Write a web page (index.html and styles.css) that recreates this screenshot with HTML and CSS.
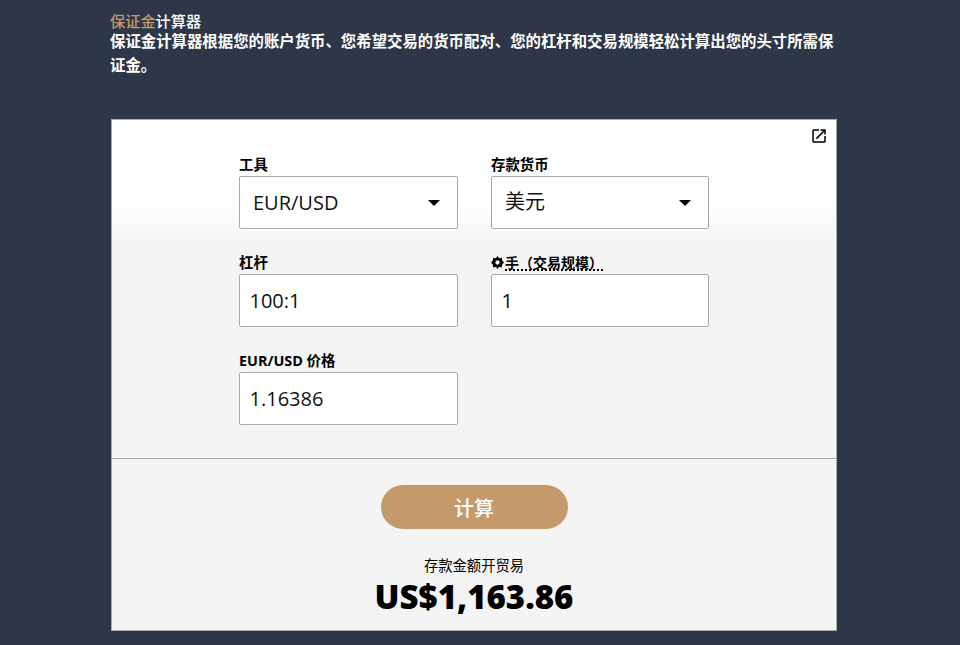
FILE: index.html
```html
<!DOCTYPE html>
<html lang="zh">
<head>
<meta charset="utf-8">
<title>保证金计算器</title>
<link rel="stylesheet" href="styles.css">
</head>
<body>
<main class="page">
  <header class="intro">
    <h1 class="title"><span class="accent">保证金</span>计算器</h1>
    <p class="desc">保证金计算器根据您的账户货币、您希望交易的货币配对、您的杠杆和交易规模轻松计算出您的头寸所需保证金。</p>
  </header>
  <section class="card">
    <a class="popout" aria-label="open">
      <svg viewBox="0 0 24 24" width="18" height="18"><path d="M19 19H5V5h7V3H5a2 2 0 0 0-2 2v14a2 2 0 0 0 2 2h14a2 2 0 0 0 2-2v-7h-2v7zM14 3v2h3.59l-9.83 9.83 1.41 1.41L19 6.41V10h2V3h-7z"/></svg>
    </a>
    <div class="form">
      <div class="field">
        <label class="label">工具</label>
        <div class="control select"><span>EUR/USD</span><i class="caret"></i></div>
      </div>
      <div class="field">
        <label class="label">存款货币</label>
        <div class="control select"><span class="cjk-value">美元</span><i class="caret"></i></div>
      </div>
      <div class="field">
        <label class="label">杠杆</label>
        <div class="control">100:1</div>
      </div>
      <div class="field">
        <label class="label label-icon">
          <svg viewBox="0 0 24 24" width="13" height="13"><path fill-rule="evenodd" d="M12 0l3 4 5-1 .5 5 3.500 4-3.500 4-.5 5-5-1-3 4-3-4-5 1-.5-5L0 12l3.500-4L4 3l5 1zM12 8a4 4 0 1 0 0 8 4 4 0 0 0 0-8z"/></svg>
          <span class="dotted">手（交易规模）</span>
        </label>
        <div class="control">1</div>
      </div>
      <div class="field">
        <label class="label">EUR/USD 价格</label>
        <div class="control">1.16386</div>
      </div>
    </div>
    <div class="result">
      <button class="calc" type="button">计算</button>
      <p class="result-label">存款金额开贸易</p>
      <p class="amount">US$1,163.86</p>
    </div>
  </section>
</main>
</body>
</html>
```
FILE: styles.css
```css
* { box-sizing: border-box; }
html, body { margin: 0; height: 100%; }
body {
  background: #2d3748;
  font-family: "Open Sans", "Noto Sans CJK SC", sans-serif;
  overflow: hidden;
}
.page { width: 960px; height: 645px; padding: 12px 0 0 110px; }
.intro { width: 730px; height: 69px; color: #fff; }
.title { margin: 0; font-size: 15.2px; line-height: 18px; font-weight: 500; }
.accent { color: #c49a6c; }
.desc { margin: 0; font-size: 15.4px; line-height: 24px; font-weight: 600; }
.card {
  position: relative;
  width: 726px;
  height: 512px;
  margin: 38px 0 0 1px;
  border: 1px solid #aaa;
  background: linear-gradient(#fff 0, #fff 80px, #f4f4f4 130px);
}
.popout { position: absolute; top: 7px; right: 8.5px; display: block; height: 18px; }
.form {
  height: 339px;
  padding: 56px 127px 0 127px;
  display: grid;
  grid-template-columns: 219px 218px;
  column-gap: 33px;
  grid-auto-rows: 53px;
  row-gap: 45px;
  border-bottom: 1px solid #aaa;
}
.field { position: relative; display: flex; flex-direction: column; padding-top: 21px; height: 74px; margin-top: -21px; }
.label {
  position: absolute;
  top: 1px;
  left: 0;
  font-size: 14.4px;
  line-height: 18px;
  font-weight: 700;
  color: #000;
  white-space: nowrap;
}
.label-icon { display: flex; align-items: center; }
.dotted { border-bottom: 2px dotted #000; font-size: 14px; line-height: 13px; margin: 2px 0 0 1px; }
.control {
  height: 53px;
  border: 1px solid #aaa;
  border-radius: 2px;
  background: #fff;
  padding: 0 9.5px;
  display: flex;
  align-items: center;
  justify-content: space-between;
  font-size: 20px;
  color: #111;
}
.select { padding: 0 17px 0 13px; }
.cjk-value { position: relative; top: -2px; }
.caret {
  width: 0; height: 0;
  border-left: 6px solid transparent;
  border-right: 6px solid transparent;
  border-top: 6px solid #000;
}
.result { display: flex; flex-direction: column; align-items: center; padding-top: 26px; }
.calc {
  width: 187px;
  height: 44px;
  border: 0;
  border-radius: 22px;
  background: #c49a6c;
  color: #fff;
  font: 500 20px "Open Sans", "Noto Sans CJK SC", sans-serif;
}
.result-label { margin: 27px 0 0; font-size: 14.3px; line-height: 20px; color: #000; }
.amount { margin: 0; font-size: 33px; line-height: 42px; font-weight: 800; color: #000; }
```
